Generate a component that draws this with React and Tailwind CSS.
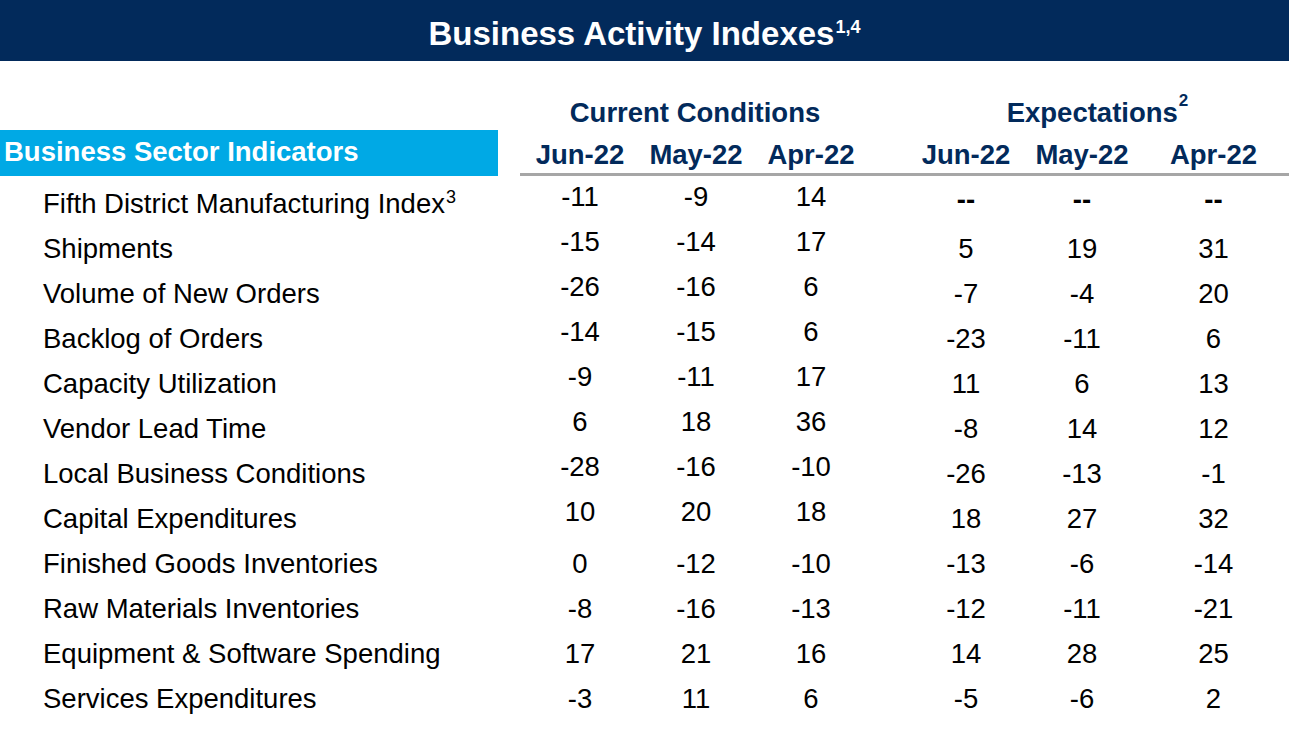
import React from 'react';

const font = "font-['Liberation_Sans',Arial,Helvetica,sans-serif]";
const cols = 'grid grid-cols-[520px_120px_112px_118px_36px_120px_112px_151px]';

const rows = [
  ['Fifth District Manufacturing Index', [-11, -9, 14], ['--', '--', '--'], '3'],
  ['Shipments', [-15, -14, 17], [5, 19, 31]],
  ['Volume of New Orders', [-26, -16, 6], [-7, -4, 20]],
  ['Backlog of Orders', [-14, -15, 6], [-23, -11, 6]],
  ['Capacity Utilization', [-9, -11, 17], [11, 6, 13]],
  ['Vendor Lead Time', [6, 18, 36], [-8, 14, 12]],
  ['Local Business Conditions', [-28, -16, -10], [-26, -13, -1]],
  ['Capital Expenditures', [10, 20, 18], [18, 27, 32]],
  ['Finished Goods Inventories', [0, -12, -10], [-13, -6, -14]],
  ['Raw Materials Inventories', [-8, -16, -13], [-12, -11, -21]],
  ['Equipment & Software Spending', [17, 21, 16], [14, 28, 25]],
  ['Services Expenditures', [-3, 11, 6], [-5, -6, 2]],
];

export default function App() {
  return (
    <div className={`w-[1289px] h-[736px] bg-white text-black overflow-hidden ${font}`}>
      {/* title bar */}
      <div className="h-[61px] bg-[#022a5b] text-white text-center font-bold text-[33px] leading-[33px] pt-[17px] whitespace-nowrap">
        Business Activity Indexes
        <span className="text-[18px] leading-[0] align-[12px] ml-[1px]">1,4</span>
      </div>

      {/* group headers */}
      <div className={`${cols} h-[69px] pt-[36px] text-[27.5px] leading-[32px] font-bold text-[#022a5b]`}>
        <div />
        <div className="col-span-3 text-center whitespace-nowrap">Current Conditions</div>
        <div />
        <div className="col-span-3 text-center whitespace-nowrap">
          Expectations
          <span className="text-[17px] leading-[0] align-[16px] ml-[1px]">2</span>
        </div>
      </div>

      {/* month headers */}
      <div className="flex h-[46px] text-[27.5px] font-bold">
        <div className="w-[520px] shrink-0">
          <div className="w-[498px] h-full bg-[#00a9e5] text-white pl-[4px] leading-[43px] whitespace-nowrap">
            Business Sector Indicators
          </div>
        </div>
        <div className="flex-1 grid grid-cols-[120px_112px_118px_36px_120px_112px_151px] border-b-[3px] border-[#a6a6a6] text-[#022a5b] pt-[7px] leading-[36px] text-center whitespace-nowrap">
          <div>Jun-22</div>
          <div>May-22</div>
          <div>Apr-22</div>
          <div />
          <div>Jun-22</div>
          <div>May-22</div>
          <div>Apr-22</div>
        </div>
      </div>

      {/* data rows */}
      <div className="pt-[5px] text-[27.5px]">
        {rows.map(([label, cur, exp, sup], i) => (
          <div key={label} className={`${cols} h-[45px] items-start`}>
            <div className="pl-[43px] leading-[45px] whitespace-nowrap">
              {label}
              {sup && <span className="text-[18px] leading-[0] align-[10px] ml-[1px]">{sup}</span>}
            </div>
            {cur.map((v, j) => (
              <div key={j} className={`text-center ${i < 8 ? 'leading-[31px]' : 'leading-[45px]'}`}>
                {v}
              </div>
            ))}
            <div />
            {exp.map((v, j) => (
              <div key={j} className={`text-center ${v === '--' ? 'font-bold leading-[37px]' : 'leading-[45px]'}`}>
                {v}
              </div>
            ))}
          </div>
        ))}
      </div>
    </div>
  );
}
